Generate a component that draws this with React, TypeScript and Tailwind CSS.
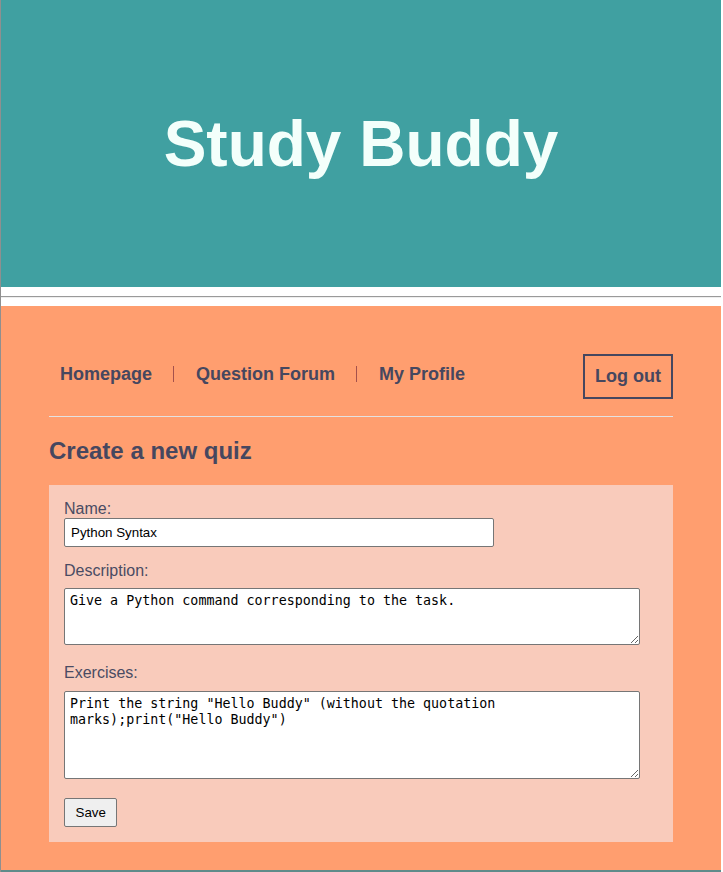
import React from 'react'

const sans = { fontFamily: '"Liberation Sans", Arial, sans-serif' }
const mono = { fontFamily: '"DejaVu Sans Mono", monospace' }

function NavLink({ children }: { children: React.ReactNode }) {
  return (
    <a href="#" className="text-[18px] font-bold text-[#46475f]">
      {children}
    </a>
  )
}

function Divider() {
  return <span className="mr-[22px] ml-[21px] h-[16px] w-px bg-[#a4514c]" />
}

export default function App() {
  return (
    <div
      className="min-h-[872px] w-[723px] border-l border-[#8f8f8f] bg-white"
      style={sans}
    >
      <header className="flex h-[287px] w-[720px] items-center justify-center bg-[#40a0a1]">
        <h1 className="text-[64px] font-bold leading-none text-[#f3fffb]">
          Study Buddy
        </h1>
      </header>

      <hr className="mx-0 mt-[9px] mb-[8px] w-[720px] border-t-[1px] border-b-[1px] border-t-[#9a9a9a] border-b-[#eeeeee]" />

      <main className="h-[564px] w-[720px] bg-[#ff9e6f] px-[48px] pt-[48px]">
        <nav className="flex h-[44px] items-center justify-between">
          <div className="mb-[4px] flex items-center pl-[11px]">
            <NavLink>Homepage</NavLink>
            <Divider />
            <NavLink>Question Forum</NavLink>
            <Divider />
            <NavLink>My Profile</NavLink>
          </div>
          <button className="h-[45px] w-[90px] border-2 border-[#46475f] text-[18px] font-bold text-[#46475f]">
            Log out
          </button>
        </nav>

        <div className="mt-[18px] h-px bg-[#e4e2e2]" />

        <h2 className="mt-[20px] text-[24px] font-bold leading-[28px] text-[#46475f]">
          Create a new quiz
        </h2>

        <form
          className="mt-[20px] flex h-[357px] flex-col bg-[#f9cbbb] px-[15px] pt-[15px] text-[16px] text-[#4a4b63]"
          onSubmit={(e) => e.preventDefault()}
        >
          <label className="leading-[18px]">Name:</label>
          <input
            type="text"
            defaultValue="Python Syntax"
            className="h-[29px] w-[430px] rounded-[2px] border border-[#767676] bg-white px-[6px] text-[13.33px] text-black"
          />

          <label className="mt-[15px] leading-[18px]">Description:</label>
          <textarea
            defaultValue="Give a Python command corresponding to the task."
            className="mt-[8px] h-[57px] w-[576px] rounded-[2px] border border-[#767676] bg-white px-[5px] pt-[4px] pb-[2px] text-[13.33px] leading-[16px] text-black"
            style={mono}
          />

          <label className="mt-[19px] leading-[18px]">Exercises:</label>
          <textarea
            defaultValue={'Print the string "Hello Buddy" (without the quotation\nmarks);print("Hello Buddy")'}
            className="mt-[9px] h-[88px] w-[576px] rounded-[2px] border border-[#767676] bg-white px-[5px] pt-[4px] pb-[2px] text-[13.33px] leading-[16px] text-black"
            style={mono}
          />

          <div className="mt-[19px]">
            <button
              type="submit"
              className="h-[29px] rounded-[2px] border border-[#767676] bg-[#efefef] px-[10.5px] text-[13.33px] text-black"
            >
              Save
            </button>
          </div>
        </form>
      </main>

      <div className="h-[2px] w-[720px] bg-[#5f8b8b]" />
    </div>
  )
}
